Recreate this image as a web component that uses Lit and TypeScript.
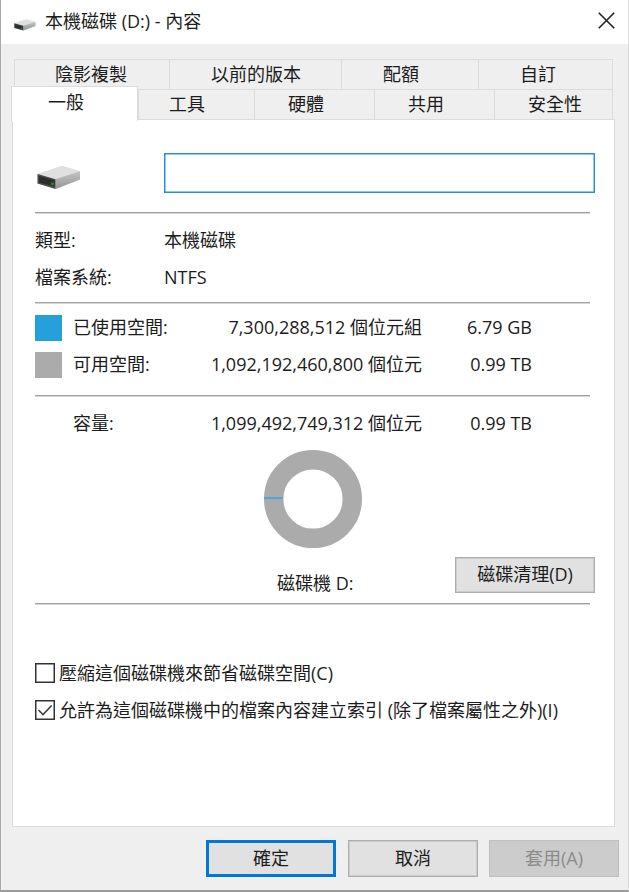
import { LitElement, html, css, svg } from "lit";
import { customElement, property } from "lit/decorators.js";

@customElement("drive-icon")
class DriveIcon extends LitElement {
  static styles = css`
    :host { display: block; }
    svg { display: block; width: 100%; height: 100%; }
  `;
  render() {
    return html`<svg viewBox="0 0 44 25" preserveAspectRatio="none">
      <defs>
        <linearGradient id="side" x1="0" y1="0" x2="0" y2="1">
          <stop offset="0" stop-color="#c4c4c4"></stop>
          <stop offset="1" stop-color="#969696"></stop>
        </linearGradient>
      </defs>
      <path d="M0.5 9 25 1 43 6.3 43 14.5 19 24 0.5 18.5Z" fill="#d2d2d2"></path>
      <path d="M0.5 9 25 1 43 6.3 19 14.2Z" fill="#e0e0e0"></path>
      <path d="M18.5 14.2 43 6.3V14.5L18.5 24Z" fill="url(#side)"></path>
      <path d="M0.5 9 18.5 14.2V24L0.5 18.5Z" fill="#4a4c4b"></path>
      <path d="M2 11 17.5 15.2V21.5L2 17.5Z" fill="#2b2d2c"></path>
      <circle cx="15.4" cy="18.8" r="1.5" fill="#1b9427"></circle>
    </svg>`;
  }
}

@customElement("usage-ring")
class UsageRing extends LitElement {
  @property({ type: Number }) used = 0;
  static styles = css`
    :host { display: block; width: 100px; height: 100px; }
    svg { display: block; }
  `;
  render() {
    const sweep = Math.max(2.2, this.used * 2 * Math.PI * 39.3);
    return html`<svg width="100" height="100" viewBox="0 0 100 100">
      <circle cx="50" cy="50" r="39.3" fill="none" stroke="#ababab" stroke-width="19.4"></circle>
      ${svg`<rect x="1.2" y=${50 - sweep + 0.2} width="18.6" height=${sweep} fill="#4fa6d8"></rect>`}
    </svg>`;
  }
}

@customElement("app-root")
class AppRoot extends LitElement {
  static styles = css`
    :host {
      display: block;
      font: 18px/24px "Open Sans", "Noto Sans CJK TC", sans-serif;
      color: #1c1c1c;
    }
    * { box-sizing: border-box; }
    .window {
      width: 629px; height: 892px; background: #efefef;
      border-left: 1px solid #a9a9a9; border-right: 1px solid #dcdcdc;
      border-bottom: 2px solid #9b9b9b;
      display: flex; flex-direction: column; overflow: hidden; white-space: nowrap;
    }
    .title {
      height: 44px; background: #fff; flex: none;
      display: flex; align-items: center; padding: 0 13px 3px 13px;
    }
    .title drive-icon { width: 22px; height: 12px; margin-top: 8px; }
    .caption { margin-left: 9px; flex: 1; }
    .close { width: 17px; height: 17px; display: block; }
    .tabs { margin: 15px 15px 0 13px; display: grid; border: 1px solid #dcdcdc; border-bottom: 0; height: 30px; flex: none; }
    .back { grid-template-columns: 154px 172px 137px 1fr; }
    .front { grid-template-columns: 123px 116px 120px 120px 1fr; margin-top: 0; }
    .tab { border-left: 1px solid #dcdcdc; line-height: 29px; }
    .tab:first-child { border-left: 0; }
    .back .tab { padding-left: 41px; }
    .back .tab:nth-child(1) { padding-left: 40px; }
    .front .tab { padding-left: 33px; }
    .front .tab:nth-child(2) { padding-left: 30px; }
    .front .tab.active {
      background: #fff; border: 1px solid #dcdcdc; border-bottom: 0;
      margin: -4px 0 -2px -4px; padding-left: 36px; line-height: 30px;
      position: relative; z-index: 1;
    }
    .panel {
      margin: 0 13px 0 11px; height: 708px; flex: none; background: #fff;
      border: 1px solid #dcdcdc; padding: 33px 0 0 22px;
    }
    .name { display: flex; height: 40px; }
    .name drive-icon { width: 44px; height: 25px; margin: 12px 83px 0 2px; }
    .field { width: 431px; height: 40px; border: 1px solid #2b8de0; box-shadow: inset 0 0 0 0.5px #2b8de0; background: #fff; }
    .rule { width: 555px; height: 2px; background: linear-gradient(#a2a2a2 50%, #d6d6d6 50%); }
    .r1 { margin-top: 19px; }
    .r2 { margin-top: 7px; }
    .r3 { margin-top: 13px; }
    .r4 { margin-top: 10px; }
    .row { height: 37px; display: grid; align-items: center; }
    .info { grid-template-columns: 129px 1fr; }
    .types { margin-top: 7px; }
    .space { grid-template-columns: 38px 110px 239px 110px; }
    .spaces { margin-top: 4px; }
    .total { margin-top: 7px; }
    .num { text-align: right; }
    .swatch { width: 27px; height: 26px; margin-top: 2px; }
    .blue { background: #26a0da; }
    .gray { background: #ababab; }
    usage-ring { margin: 8px 0 0 228px; }
    .clean { display: flex; margin-top: 8px; height: 36px; }
    .drive { width: 178px; margin: 14px 0 0 242px; line-height: 24px; }
    .btn {
      background: #e1e1e1; border: 1px solid #adadad; box-shadow: inset 0 0 0 1px #cccccc;
      height: 37px; width: 130px; padding-bottom: 2px;
      display: flex; align-items: center; justify-content: center;
    }
    .clean .btn { width: 140px; height: 36px; }
    .checks { margin-top: 49px; }
    .check { height: 37px; display: flex; align-items: center; gap: 4px; }
    .box { width: 20px; height: 20px; border: 1px solid #333; box-shadow: inset 0 0 0 0.5px #333; flex: none; display: block; margin-top: 1px; }
    .box svg { display: block; }
    .footer { display: flex; margin: 13px 9px 0 205px; }
    .ok { border: 3px solid #0078d7; box-shadow: none; margin-right: 12px; }
    .cancel { margin-right: 11px; }
    .off { background: #cccccc; border-color: #bfbfbf; color: #8b8b8b; }
  `;

  private spaceRow(color: string, label: string, bytes: string, size: string) {
    return html`<div class="row space">
      <span class=${color ? "swatch " + color : ""}></span>
      <span>${label}</span><span class="num">${bytes}</span><span class="num">${size}</span>
    </div>`;
  }

  render() {
    return html`<div class="window" lang="zh-TW">
      <div class="title">
        <drive-icon></drive-icon>
        <span class="caption">本機磁碟 (D:) - 內容</span>
        <svg class="close" viewBox="0 0 17 17"><path d="M.8.8 16.2 16.2M16.2.8.8 16.2" stroke="#222" stroke-width="1.6"></path></svg>
      </div>
      <div class="tabs back">
        ${["陰影複製", "以前的版本", "配額", "自訂"].map((t) => html`<div class="tab">${t}</div>`)}
      </div>
      <div class="tabs front">
        ${["一般", "工具", "硬體", "共用", "安全性"].map((t, i) => html`<div class="tab ${i ? "" : "active"}">${t}</div>`)}
      </div>
      <div class="panel">
        <div class="name"><drive-icon></drive-icon><div class="field"></div></div>
        <div class="rule r1"></div>
        <div class="types">
          <div class="row info"><span>類型:</span><span>本機磁碟</span></div>
          <div class="row info"><span>檔案系統:</span><span>NTFS</span></div>
        </div>
        <div class="rule r2"></div>
        <div class="spaces">
          ${this.spaceRow("blue", "已使用空間:", "7,300,288,512 個位元組", "6.79 GB")}
          ${this.spaceRow("gray", "可用空間:", "1,092,192,460,800 個位元", "0.99 TB")}
        </div>
        <div class="rule r3"></div>
        <div class="total">${this.spaceRow("", "容量:", "1,099,492,749,312 個位元", "0.99 TB")}</div>
        <usage-ring .used=${7300288512 / 1099492749312}></usage-ring>
        <div class="clean"><span class="drive">磁碟機 D:</span><div class="btn">磁碟清理(D)</div></div>
        <div class="rule r4"></div>
        <div class="checks">
          <div class="check"><span class="box"></span><span>壓縮這個磁碟機來節省磁碟空間(C)</span></div>
          <div class="check">
            <span class="box"><svg width="18" height="18" viewBox="0 0 18 18"><path d="M2.5 9 7 13.5 15.7 4.5" fill="none" stroke="#444" stroke-width="1.7"></path></svg></span>
            <span>允許為這個磁碟機中的檔案內容建立索引 (除了檔案屬性之外)(I)</span>
          </div>
        </div>
      </div>
      <div class="footer">
        <div class="btn ok">確定</div><div class="btn cancel">取消</div><div class="btn off">套用(A)</div>
      </div>
    </div>`;
  }
}
